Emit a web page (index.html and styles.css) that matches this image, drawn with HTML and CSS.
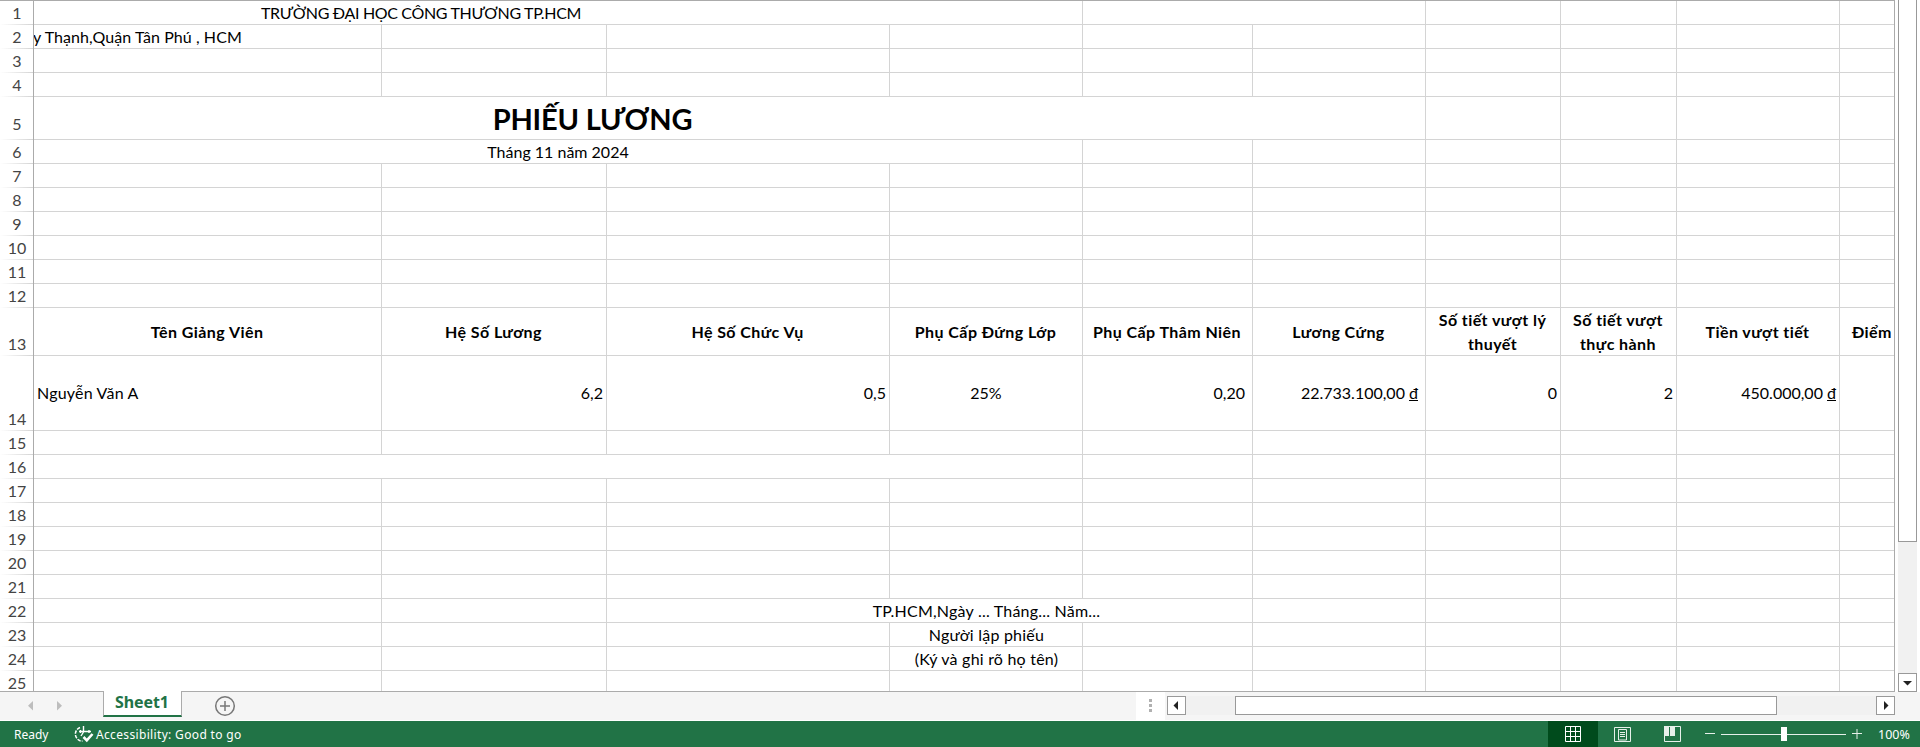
FILE: index.html
```html
<!DOCTYPE html>
<html lang="vi">
<head>
<meta charset="utf-8">
<title>Phiếu lương</title>
<link rel="stylesheet" href="styles.css">
</head>
<body>
<div class="workspace">
<div class="pane">
<table class="sheet">
<colgroup><col class="c-head"><col class="c-a"><col class="c-b"><col class="c-c"><col class="c-d"><col class="c-e"><col class="c-f"><col class="c-g"><col class="c-h"><col class="c-i"><col class="c-j"></colgroup>
<tr><th>1</th><td colspan="4" class="center shifted"><span class="school">TRƯỜNG ĐẠI HỌC CÔNG THƯƠNG TP.HCM</span></td><td colspan="2"></td><td></td><td></td><td></td><td></td></tr>
<tr><th>2</th><td class="cut"><span class="address">y Thạnh,Quận Tân Phú , HCM</span></td><td></td><td></td><td></td><td></td><td></td><td></td><td></td><td></td><td></td></tr>
<tr><th>3</th><td></td><td></td><td></td><td></td><td></td><td></td><td></td><td></td><td></td><td></td></tr>
<tr><th>4</th><td></td><td></td><td></td><td></td><td></td><td></td><td></td><td></td><td></td><td></td></tr>
<tr class="r-title"><th>5</th><td colspan="6" class="center shifted"><span class="title">PHIẾU LƯƠNG</span></td><td></td><td></td><td></td><td></td></tr>
<tr><th>6</th><td colspan="4" class="center"><span class="month">Tháng 11 năm 2024</span></td><td></td><td></td><td></td><td></td><td></td><td></td></tr>
<tr><th>7</th><td></td><td></td><td></td><td></td><td></td><td></td><td></td><td></td><td></td><td></td></tr>
<tr><th>8</th><td></td><td></td><td></td><td></td><td></td><td></td><td></td><td></td><td></td><td></td></tr>
<tr><th>9</th><td></td><td></td><td></td><td></td><td></td><td></td><td></td><td></td><td></td><td></td></tr>
<tr><th>10</th><td></td><td></td><td></td><td></td><td></td><td></td><td></td><td></td><td></td><td></td></tr>
<tr><th>11</th><td></td><td></td><td></td><td></td><td></td><td></td><td></td><td></td><td></td><td></td></tr>
<tr><th>12</th><td></td><td></td><td></td><td></td><td></td><td></td><td></td><td></td><td></td><td></td></tr>
<tr class="r-labels"><th>13</th><td>Tên Giảng Viên</td><td>Hệ Số Lương</td><td>Hệ Số Chức Vụ</td><td>Phụ Cấp Đứng Lớp</td><td>Phụ Cấp Thâm Niên</td><td>Lương Cứng</td><td><span class="two-line">Số tiết vượt lý<br>thuyết</span></td><td><span class="two-line">Số tiết vượt<br>thực hành</span></td><td>Tiền vượt tiết</td><td class="clip-right">Điểm</td></tr>
<tr class="r-values"><th>14</th><td class="name">Nguyễn Văn A</td><td class="num">6,2</td><td class="num">0,5</td><td class="center">25%</td><td class="num inset">0,20</td><td class="num inset">22.733.100,00 <u>đ</u></td><td class="num">0</td><td class="num">2</td><td class="num">450.000,00 <u>đ</u></td><td></td></tr>
<tr><th>15</th><td></td><td></td><td></td><td></td><td></td><td></td><td></td><td></td><td></td><td></td></tr>
<tr><th>16</th><td colspan="4"></td><td></td><td></td><td></td><td></td><td></td><td></td></tr>
<tr><th>17</th><td></td><td></td><td></td><td></td><td></td><td></td><td></td><td></td><td></td><td></td></tr>
<tr><th>18</th><td></td><td></td><td></td><td></td><td></td><td></td><td></td><td></td><td></td><td></td></tr>
<tr><th>19</th><td></td><td></td><td></td><td></td><td></td><td></td><td></td><td></td><td></td><td></td></tr>
<tr><th>20</th><td></td><td></td><td></td><td></td><td></td><td></td><td></td><td></td><td></td><td></td></tr>
<tr><th>21</th><td></td><td></td><td></td><td></td><td></td><td></td><td></td><td></td><td></td><td></td></tr>
<tr><th>22</th><td></td><td></td><td colspan="3" class="center sign sign-date">TP.HCM,Ngày ... Tháng... Năm...</td><td></td><td></td><td></td><td></td><td></td></tr>
<tr><th>23</th><td></td><td></td><td></td><td class="center sign">Người lập phiếu</td><td></td><td></td><td></td><td></td><td></td><td></td></tr>
<tr><th>24</th><td></td><td></td><td></td><td class="center sign">(Ký và ghi rõ họ tên)</td><td></td><td></td><td></td><td></td><td></td><td></td></tr>
<tr class="r-last"><th>25</th><td></td><td></td><td></td><td></td><td></td><td></td><td></td><td></td><td></td><td></td></tr>
</table>
</div>
<div class="vscroll">
<div class="vthumb"></div>
<div class="vspace"></div>
<div class="sbtn"><svg width="17" height="17"><path d="M4 7h9l-4.500 4.500z"/></svg></div>
</div>
</div>
<div class="tabbar">
<div class="tabs">
<svg class="nav" width="40" height="28"><path d="M6 9v9.500L1 13.700z M30 9v9.500l5-4.800z"/></svg>
<div class="tab">Sheet1</div>
<svg class="add" width="22" height="22"><circle cx="11" cy="11" r="9.300"/><path d="M11 6v10M6 11h10"/></svg>
</div>
<div class="splitter"><i></i><i></i><i></i></div>
<div class="hscroll">
<div class="sbtn"><svg width="17" height="17"><path d="M10 4v9L5.500 8.500z"/></svg></div>
<div class="hthumb"></div>
<div class="sbtn last"><svg width="17" height="17"><path d="M7 4v9l4.500-4.500z"/></svg></div>
</div>
</div>
<div class="status">
<span class="ready">Ready</span>
<svg class="a11y" width="20" height="18" fill="none" stroke="#fff"><path stroke-width="1.500" stroke-dasharray="3.500 1.200" d="M6 2.500A7 7 0 0 0 4 14.500Q6 16.500 8.500 16"/><path stroke-width="1.400" d="M9.500 1v6M5 6.500h12M6.500 5v3M15 5v3M9.500 7L7 11"/><path stroke-width="2.600" d="M9.500 12l3.300 3.300L18.500 9"/></svg>
<span class="access">Accessibility: Good to go</span>
<div class="views">
<div class="view active"><svg width="16" height="16" fill="none" stroke="#fff"><path d="M.5.5h15v15H.5zM5.500.5v15M10.500.5v15M.5 5.500h15M.5 10.500h15"/></svg></div>
<div class="view"><svg width="17" height="15" fill="none" stroke="#e6f0ea"><path d="M.5.5h16v14H.5zM4.500 2.500h8v10.500h-8zM6 5.500h5M6 7.500h5M6 9.500h5"/></svg></div>
<div class="view"><svg width="17" height="16"><path fill="none" stroke="#e6f0ea" d="M.5.5h16v15H.5z"/><path fill="#e6f0ea" d="M0 0h5v10H0zM6 0h5v10H6z"/></svg></div>
</div>
<svg class="zoom" width="160" height="16"><path fill="none" stroke="#e6f0ea" d="M0 7.500h10M16 8.500h125M147 7.500h10M152 3v10"/><path fill="#fff" d="M76 1h6v14h-6z"/></svg>
<span class="pct">100%</span>
</div>
</body>
</html>
```
FILE: styles.css
```css
* { box-sizing: border-box; }
body { margin: 0; width: 1920px; height: 747px; overflow: hidden; background: #fff; display: flex; flex-direction: column; }
svg { display: block; flex: none; }

.workspace { display: flex; height: 692px; }
.pane { width: 1895px; height: 692px; overflow: hidden; border-top: 1px solid #ababab; border-right: 1px solid #ababab; border-bottom: 1px solid #ababab; }
.sheet { width: 1895px; table-layout: fixed; border-collapse: separate; border-spacing: 0; font: 16px/20px Lato, "Open Sans", sans-serif; color: #000; }
.c-head { width: 34px; }
.c-a { width: 348px; }
.c-b { width: 225px; }
.c-c { width: 283px; }
.c-d { width: 193px; }
.c-e { width: 170px; }
.c-f { width: 173px; }
.c-g { width: 135px; }
.c-h { width: 116px; }
.c-i { width: 163px; }
.c-j { width: 55px; }
.sheet tr { height: 24px; }
.sheet td, .sheet th { padding: 0 3px 1px; height: 24px; border-right: 1px solid #d4d4d4; border-bottom: 1px solid #d4d4d4; vertical-align: bottom; white-space: nowrap; overflow: hidden; text-align: left; }
.sheet th { padding: 0 0 2px 1px; width: 34px; border-right-color: #ababab; border-bottom: 0; background: linear-gradient(to right, #fff, #d4d4d4) left bottom / 100% 1px no-repeat; color: #444; font-weight: 400; text-align: center; }
.sheet .center { text-align: center; }
.sheet .shifted { padding-right: 277px; }
.sheet .cut { padding-left: 0; }
.address { margin-left: -1px; letter-spacing: .08px; }
.school { letter-spacing: -.34px; }
.sheet .r-title td { height: 43px; padding-bottom: 0; }
.sheet .r-title th { height: 43px; padding-bottom: 6px; }
.title { font-size: 29px; line-height: 40px; font-weight: 700; letter-spacing: -.2px; }
.sheet .r-labels td { height: 48px; vertical-align: middle; text-align: center; font-weight: 700; line-height: 24px; letter-spacing: .43px; padding: 0 1px 0 0; }
.two-line { display: block; margin: -1px 0; }
.sheet .r-labels .clip-right { text-align: left; padding-left: 12px; }
.sheet .r-values td { height: 75px; vertical-align: middle; padding-bottom: 0; }
.sheet .name { letter-spacing: .2px; }
.sheet .num { text-align: right; }
.sheet .inset { padding-right: 7px; }
.sheet .sign { letter-spacing: .22px; padding-left: 4px; }
.sheet .sign-date { padding-left: 117px; }
.sheet .r-last, .sheet .r-last td, .sheet .r-last th { height: 20px; line-height: 17px; border-bottom: 0; }
.sheet .r-last th { background: none; padding: 0 0 0 1px; vertical-align: bottom; }

.vscroll { width: 19px; margin-left: 3px; display: flex; flex-direction: column; background: #f1f1f1; }
.vthumb { height: 542px; border: 1px solid #999; border-top: 0; background: #fff; }
.vspace { flex: 1; }
.sbtn { width: 19px; height: 19px; border: 1px solid #999; background: #fff; }
.sbtn svg { fill: #222; }

.tabbar { height: 29px; display: flex; background: #f5f5f5; border-bottom: 1px solid #fff; }
.tabs { width: 1136px; display: flex; }
.nav { margin-left: 27px; fill: #bdbdbd; }
.tab { width: 79px; height: 26px; margin: -1px 1px 0 36px; padding-right: 1px; background: #fff; border: 1px solid #ababab; border-top: 0; border-bottom: 2px solid #217346; color: #217346; font: 700 16px/23px "Noto Sans", "Open Sans", sans-serif; letter-spacing: -.1px; text-align: center; }
.add { margin: 3px 0 0 31px; fill: none; stroke: #777; stroke-width: 1.5; }
.splitter { width: 29px; background: #fff; display: flex; flex-direction: column; gap: 2px; padding: 7px 0 0 13px; }
.splitter i { width: 3px; height: 3px; background: #b0b0b0; }
.hscroll { display: flex; width: 728px; height: 19px; margin: 4px 0 0 2px; background: #f1f1f1; }
.hthumb { width: 542px; margin-left: 49px; background: #fff; border: 1px solid #999; }
.last { margin-left: auto; }

.status { height: 26px; background: #217346; color: #fff; display: flex; align-items: center; font: 12px/26px "Noto Sans", "Open Sans", sans-serif; white-space: nowrap; }
.ready { width: 60px; padding: 1px 0 0 14px; }
.a11y { margin-left: 14px; }
.access { margin-left: 2px; padding-top: 1px; letter-spacing: .34px; }
.views { display: flex; margin-left: auto; }
.view { width: 50px; height: 26px; display: flex; align-items: center; justify-content: center; }
.view + .view { padding-right: 2px; }
.active { background: #004b1c; }
.zoom { margin-left: 7px; }
.pct { width: 55px; padding: 1px 0 0 13px; font-size: 12.5px; }
```
